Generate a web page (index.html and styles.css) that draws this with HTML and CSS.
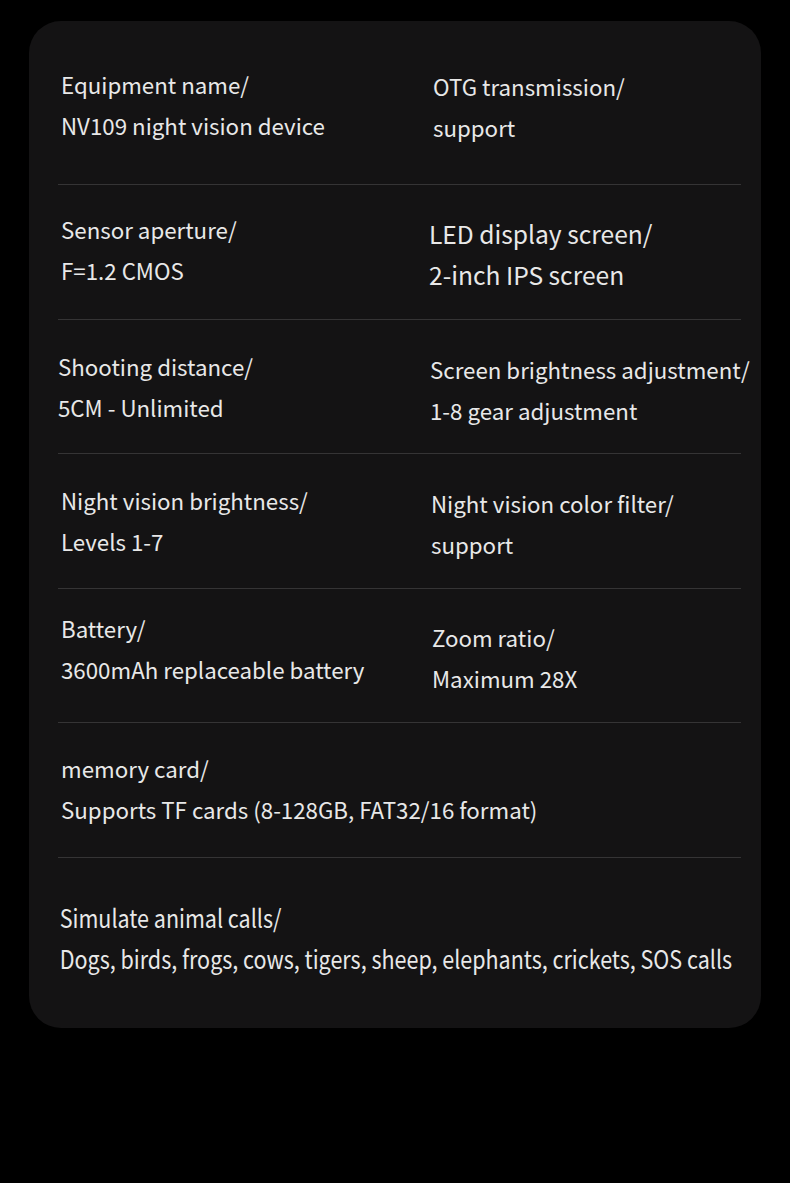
FILE: index.html
```html
<!DOCTYPE html>
<html lang="en">
<head>
<meta charset="utf-8">
<title>Specifications</title>
<link rel="stylesheet" href="styles.css">
</head>
<body>
<main class="page">
  <section class="card">
    <div class="row row-first">
      <div class="cell"><p>Equipment name/</p><p>NV109 night vision device</p></div>
      <div class="cell cell-right r1"><p>OTG transmission/</p><p>support</p></div>
    </div>
    <div class="row">
      <div class="cell r2"><p>Sensor aperture/</p><p>F=1.2 CMOS</p></div>
      <div class="cell cell-right cell-big"><p>LED display screen/</p><p>2-inch IPS screen</p></div>
    </div>
    <div class="row row-short">
      <div class="cell shift-left"><p>Shooting distance/</p><p>5CM - Unlimited</p></div>
      <div class="cell cell-right cell-lower"><p>Screen brightness adjustment/</p><p>1-8 gear adjustment</p></div>
    </div>
    <div class="row">
      <div class="cell"><p>Night vision brightness/</p><p>Levels 1-7</p></div>
      <div class="cell cell-right cell-lower r4"><p>Night vision color filter/</p><p>support</p></div>
    </div>
    <div class="row row-short">
      <div class="cell cell-high"><p>Battery/</p><p>3600mAh replaceable battery</p></div>
      <div class="cell cell-right cell-low"><p>Zoom ratio/</p><p>Maximum 28X</p></div>
    </div>
    <div class="row row-single">
      <div class="cell r6"><p>memory card/</p><p>Supports TF cards (8-128GB, FAT32/16 format)</p></div>
    </div>
    <div class="row row-single row-last">
      <div class="cell cell-narrow"><p>Simulate animal calls/</p><p>Dogs, birds, frogs, cows, tigers, sheep, elephants, crickets, SOS calls</p></div>
    </div>
  </section>
</main>
</body>
</html>
```

FILE: styles.css
```css
* { box-sizing: border-box; }
html, body { margin: 0; padding: 0; }
body {
  background: #000;
  width: 790px;
  height: 1183px;
  font-family: "Noto Sans CJK SC", "Noto Sans", sans-serif;
  color: #e8e8e8;
}
.page {
  padding: 21px 29px 0 29px;
}
.card {
  background: #141314;
  border-radius: 32px;
  padding: 0 20px 0 29px;
  height: 1007px;
}
.row {
  display: grid;
  grid-template-columns: 372px 1fr;
  align-items: start;
  height: 135px;
  border-bottom: 1px solid #353435;
}
.row-short { height: 134px; }
.row-first { height: 164px; padding-top: 43px; }
.row-single { grid-template-columns: 1fr; }
.row-last { border-bottom: none; height: 171px; padding-top: 13px; }
.cell {
  padding: 26px 0 0 3px;
  font-size: 22.3px;
  font-weight: 400;
  line-height: 41px;
  white-space: nowrap;
}
.row-first .cell { padding-top: 0; }
.cell p { margin: 0; }
.cell-right { padding-left: 0; }
.row-first .r1 { padding-top: 2px; padding-left: 3px; }
.r2 { padding-top: 24px; }
.cell-big { font-size: 24.6px; padding-top: 28px; margin-left: -1px; }
.shift-left { margin-left: -3px; padding-top: 26px; }
.cell-lower { padding-top: 29px; }
.r4 { padding-left: 1px; }
.cell-high { padding-top: 19px; }
.cell-low { padding-top: 28px; padding-left: 2px; }
.r6 { padding-top: 25px; }
.cell-narrow {
  font-size: 25px;
  padding-left: 2px;
  transform: scaleX(0.86);
  transform-origin: left top;
}
```
